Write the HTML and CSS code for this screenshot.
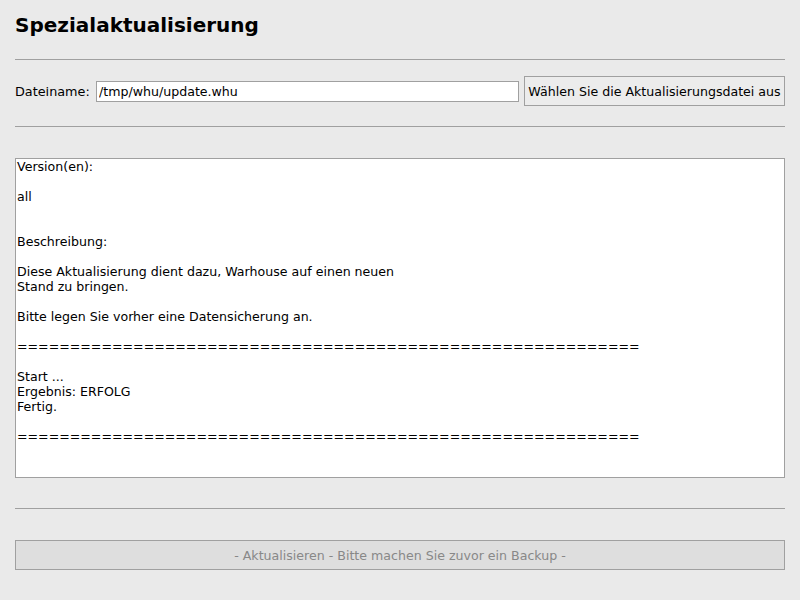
FILE: index.html
```html
<!DOCTYPE html>
<html lang="de">
<head>
<meta charset="utf-8">
<title>Spezialaktualisierung</title>
<link rel="stylesheet" href="styles.css">
</head>
<body>
<main class="page">
  <h1 class="title">Spezialaktualisierung</h1>
  <div class="rule"></div>
  <div class="file-row">
    <label class="file-label" for="file">Dateiname:</label>
    <input class="file-input" id="file" type="text" value="/tmp/whu/update.whu">
    <button class="choose-btn" type="button">Wählen Sie die Aktualisierungsdatei aus</button>
  </div>
  <div class="rule rule-2"></div>
  <div class="log">Version(en):

all


Beschreibung:

Diese Aktualisierung dient dazu, Warhouse auf einen neuen
Stand zu bringen.

Bitte legen Sie vorher eine Datensicherung an.

===========================================================

Start ...
Ergebnis: ERFOLG
Fertig.

===========================================================
</div>
  <div class="rule rule-3"></div>
  <button class="update-btn" type="button" disabled>- Aktualisieren - Bitte machen Sie zuvor ein Backup -</button>
</main>
</body>
</html>
```
FILE: styles.css
```css
html, body {
  margin: 0;
  padding: 0;
  background: #eaeaea;
}
body {
  font-family: "DejaVu Sans", sans-serif;
  font-size: 13px;
  color: #000;
}
.page {
  display: flex;
  flex-direction: column;
  padding: 0 15px;
  width: 770px;
}
.title {
  margin: 14px 0 0;
  font-size: 20px;
  line-height: 23px;
  font-weight: bold;
}
.rule {
  height: 0;
  border-top: 1px solid #a0a0a0;
  margin-top: 22px;
}
.file-row {
  display: flex;
  align-items: center;
  margin-top: 16px;
  height: 30px;
}
.file-label {
  width: 81px;
  font-size: 12.8px;
}
.file-input {
  box-sizing: border-box;
  width: 423px;
  height: 21px;
  margin: 0;
  padding: 0 2px;
  border: 1px solid #a0a0a0;
  background: #fff;
  font: 12.6px "DejaVu Sans", sans-serif;
  color: #000;
}
.choose-btn {
  box-sizing: border-box;
  margin-left: 5px;
  height: 30px;
  width: 261px;
  padding: 0;
  border: 1px solid #a0a0a0;
  background: #ececec;
  font: 12.6px "DejaVu Sans", sans-serif;
  color: #000;
  white-space: nowrap;
}
.rule-2 {
  margin-top: 20px;
}
.log {
  box-sizing: border-box;
  margin-top: 31px;
  height: 320px;
  border: 1px solid #a0a0a0;
  background: #fff;
  padding: 0 0 0 1px;
  white-space: pre;
  font-size: 12.6px;
  line-height: 15px;
  overflow: hidden;
}
.rule-3 {
  margin-top: 30px;
}
.update-btn {
  box-sizing: border-box;
  margin-top: 31px;
  height: 30px;
  width: 100%;
  border: 1px solid #a0a0a0;
  background: #dedede;
  color: #888;
  font: 12.6px "DejaVu Sans", sans-serif;
  padding: 0;
}
```
